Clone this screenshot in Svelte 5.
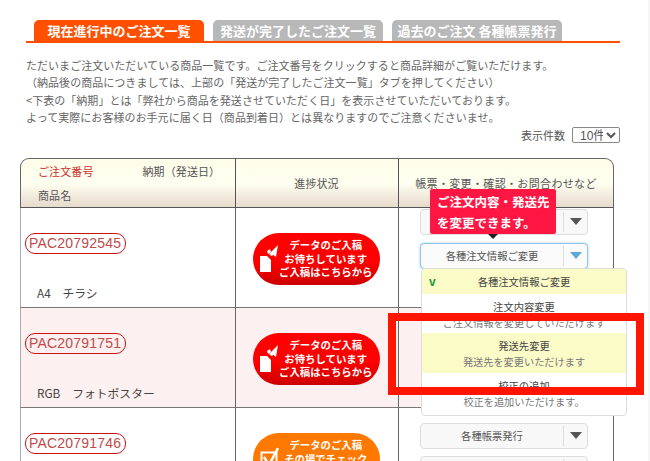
<script>
	const intro = [
		"ただいまご注文いただいている商品一覧です。ご注文番号をクリックすると商品詳細がご覧いただけます。",
		"（納品後の商品につきましては、上部の「発送が完了したご注文一覧」タブを押してください）",
		"<下表の「納期」とは「弊社から商品を発送させていただく日」を表示させていただいております。",
		"よって実際にお客様のお手元に届く日（商品到着日）とは異なりますのでご注意くださいませ。"
	];

	const tabs = ["現在進行中のご注文一覧", "発送が完了したご注文一覧", "過去のご注文 各種帳票発行"];

	const orders = [
		{ no: "PAC20792545", name: "A4　チラシ", kind: "wait", lines: ["データのご入稿", "お待ちしています", "ご入稿はこちらから"], open: true },
		{ no: "PAC20791751", name: "RGB　フォトポスター", kind: "wait", lines: ["データのご入稿", "お待ちしています", "ご入稿はこちらから"], pink: true },
		{ no: "PAC20791746", name: "", kind: "check", lines: ["データのご入稿", "その場でチェック", "ご入稿はこちらから"] }
	];
</script>

<div class="page">
	<div class="tabs">
		{#each tabs as t, i}
			<div class="tab" class:active={i === 0}>{t}</div>
		{/each}
	</div>

	<div class="intro">
		{#each intro as line}
			<p>{line}</p>
		{/each}
	</div>

	<div class="count">
		<span>表示件数</span>
		<select><option>10件</option></select>
	</div>

	<div class="table">
		<div class="th first">
			<div class="th-top">
				<span class="red">ご注文番号</span>
				<span>納期（発送日）</span>
			</div>
			<div>商品名</div>
		</div>
		<div class="th mid">進捗状況</div>
		<div class="th last">帳票・変更・確認・お問合わせなど</div>

		{#each orders as o}
			<div class="td info" class:pink={o.pink}>
				<a class="no" href="#top">{o.no}</a>
				<div class="name">{o.name}</div>
			</div>
			<div class="td status" class:pink={o.pink}>
				<div class="pill {o.kind}">
					{#if o.kind === "wait"}
						<svg width="19" height="27" viewBox="0 0 19 27">
							<path d="M0 11h7l4 4v12H0z" fill="#fff" />
							<path d="M9 9l9-9-2 12-2.500-2-2 1z" fill="#fff" />
							<path d="M7 6l3-2 1 3-3 2z" fill="#fff" />
						</svg>
					{:else}
						<svg width="19" height="24" viewBox="0 0 19 24">
							<rect x="1.500" y="5.500" width="15" height="15" fill="none" stroke="#fff" stroke-width="2" />
							<path d="M4 10l5 8 9-17" fill="none" stroke="#fff" stroke-width="2.500" />
						</svg>
					{/if}
					<div class="pill-text">
						{#each o.lines as l}
							<div>{l}</div>
						{/each}
					</div>
				</div>
			</div>
			<div class="td actions" class:pink={o.pink} class:open={o.open}>
				{#if o.open}
					<div class="split"><span class="label">各種帳票発行</span><span class="arrow"><i></i></span></div>
					<div class="tooltip">ご注文内容・発送先<br />を変更できます。</div>
					<div class="split focus">
						<span class="label">各種注文情報ご変更</span><span class="arrow"><i></i></span>
						<div class="menu">
							<div class="item picked"><span class="tick">v</span>各種注文情報ご変更</div>
							<div class="item plain">
								<b>注文内容変更</b>
								<small>ご注文情報を変更していただけます</small>
							</div>
							<div class="item hover">
								<b>発送先変更</b>
								<small>発送先を変更いただけます</small>
							</div>
							<div class="item plain">
								<b>校正の追加</b>
								<small>校正を追加いただけます。</small>
							</div>
						</div>
					</div>
				{:else if !o.pink}
					<div class="split"><span class="label">各種帳票発行</span><span class="arrow"><i></i></span></div>
					<div class="split"><span class="label">各種注文情報ご変更</span><span class="arrow"><i></i></span></div>
				{/if}
			</div>
		{/each}
	</div>

	<div class="callout"></div>
</div>

<style>
	:global(body) {
		margin: 0;
		background: #fff;
	}

	.page {
		position: relative;
		height: 461px;
		overflow: hidden;
		padding-top: 20px;
		box-sizing: border-box;
		border-right: 2px solid #f6f6f6;
		font-family: "Noto Sans CJK JP", "Liberation Sans", sans-serif;
		font-size: 11px;
		color: #555;
	}

	.tabs {
		display: flex;
		gap: 9px;
		width: 586px;
		height: 21px;
		margin-left: 26px;
		padding-left: 8px;
		border-bottom: 2px solid #ff5000;
	}
	.tab {
		width: 170px;
		height: 21px;
		border-radius: 5px 5px 0 0;
		background: #b8b8b8;
		color: #fff;
		font-size: 13px;
		font-weight: 700;
		line-height: 21px;
		text-align: center;
		white-space: nowrap;
	}
	.tab.active {
		background: #ff5000;
		height: 23px;
	}

	.intro {
		margin: 14px 0 0 26px;
		line-height: 17.4px;
		color: #666;
		letter-spacing: 0.04px;
	}
	.intro p {
		margin: 0;
		white-space: nowrap;
	}

	.count {
		display: flex;
		justify-content: flex-end;
		align-items: center;
		gap: 7px;
		width: 620px;
		height: 16px;
	}
	.count select {
		width: 48px;
		height: 16px;
		padding: 0 0 0 3px;
		border: 1px solid #888;
		border-radius: 2px;
		background: #fff;
		color: #555;
		font-family: "Liberation Sans", "Noto Sans CJK JP", sans-serif;
		font-size: 12px;
		line-height: 14px;
	}

	.table {
		display: grid;
		grid-template-columns: 215px 163px 216px;
		grid-template-rows: 50px 100px 100px 100px;
		width: 594px;
		margin: 15px 0 0 20px;
	}

	.th {
		display: flex;
		align-items: center;
		justify-content: center;
		box-sizing: border-box;
		background: linear-gradient(#fefde9 0, #fffff0 50%, #e6dbcd 100%);
		border-top: 1px solid #666;
		border-bottom: 1px solid #555;
		letter-spacing: 0.1px;
	}
	.th.first {
		display: block;
		padding: 0 0 0 17px;
		border-left: 1px solid #666;
		border-top-left-radius: 9px;
		line-height: 24px;
	}
	.th-top {
		display: flex;
		gap: 49px;
	}
	.red {
		color: #cc3333;
	}
	.th.mid {
		border-left: 1px solid #555;
		padding-right: 1px;
	}
	.th.last {
		border-left: 1px solid #555;
		border-right: 1px solid #666;
		border-top-right-radius: 9px;
		letter-spacing: 0.35px;
	}

	.td {
		box-sizing: border-box;
		background: #fff;
		border-bottom: 1px solid #777;
		border-left: 1px solid #666;
	}
	.td.pink {
		background: #fdf0f0;
	}

	.info {
		display: flex;
		flex-direction: column;
		align-items: flex-start;
		padding: 25px 0 0 4px;
		border-left-color: #aaa;
	}
	.no {
		padding: 0 4px 0 3px;
		height: 19px;
		border: 1px solid #cc1111;
		border-radius: 10px;
		color: #c24a4a;
		font-family: "Liberation Sans", sans-serif;
		font-size: 14px;
		letter-spacing: 0.2px;
		line-height: 19px;
		text-decoration: none;
	}
	.name {
		margin: auto 0 6px 12px;
		font-size: 11.8px;
		color: #444;
	}

	.status {
		padding: 25px 0 0 17px;
	}
	.pill {
		display: flex;
		align-items: center;
		width: 127px;
		height: 52px;
		padding-left: 7px;
		box-sizing: border-box;
		border-radius: 26px;
		color: #fff;
		font-size: 10.4px;
		font-weight: 700;
	}
	.pill svg {
		flex: none;
	}
	.pill.wait {
		background: linear-gradient(#ff0000 55%, #cc0000);
	}
	.pill.check {
		background: #ff7800;
	}
	.pill-text {
		flex: 1;
		padding-right: 8px;
		line-height: 13.5px;
		text-align: center;
		white-space: nowrap;
	}

	.actions {
		position: relative;
		display: flex;
		flex-direction: column;
		gap: 7px;
		padding: 15px 0 0 21px;
		border-right: 1px solid #666;
	}
	.actions.open {
		gap: 8px;
		padding-top: 1px;
	}

	.split {
		position: relative;
		display: flex;
		align-items: center;
		width: 168px;
		height: 26px;
		box-sizing: border-box;
		background: #f8f8f8;
		border: 1px solid #ddd;
		border-radius: 4px;
	}
	.split.focus {
		border-color: #8ec4ec;
		box-shadow: 0 0 3px #a8d4f4;
		background: #fbfbfb;
	}
	.label {
		width: 142px;
		font-size: 10.3px;
		text-align: center;
		color: #555;
		white-space: nowrap;
	}
	.arrow {
		display: flex;
		align-items: center;
		justify-content: center;
		flex: 1;
		height: 20px;
		border-left: 1px solid #ddd;
	}
	.arrow i {
		width: 0;
		height: 0;
		border-left: 6px solid transparent;
		border-right: 6px solid transparent;
		border-top: 7px solid #555;
	}
	.focus .arrow i {
		border-top-color: #5aa9d8;
	}

	.tooltip {
		position: absolute;
		z-index: 3;
		top: -19px;
		left: 31px;
		width: 126px;
		height: 45px;
		padding: 2px 0 0 7px;
		box-sizing: border-box;
		background: #ff1744;
		border-radius: 2px;
		color: #fff;
		font-size: 12.5px;
		font-weight: 700;
		line-height: 21px;
		white-space: nowrap;
	}
	.tooltip::after {
		content: "";
		position: absolute;
		top: 45px;
		left: 58px;
		border-left: 5px solid transparent;
		border-right: 5px solid transparent;
		border-top: 5px solid #222;
	}

	.menu {
		position: absolute;
		z-index: 2;
		top: 24px;
		left: 0;
		width: 206px;
		height: 148px;
		overflow: hidden;
		box-sizing: border-box;
		background: #fff;
		border: 1px solid #ddd;
		border-radius: 4px;
		font-size: 10.3px;
		text-align: center;
	}
	.item {
		display: flex;
		flex-direction: column;
		align-items: center;
		white-space: nowrap;
	}
	.item b {
		font-weight: 400;
		color: #444;
		line-height: 17px;
	}
	.item small {
		font-size: 10.2px;
		color: #777;
		line-height: 16px;
	}
	.picked {
		position: relative;
		height: 25px;
		justify-content: center;
		background: #fbfbc8;
		color: #444;
	}
	.tick {
		position: absolute;
		left: 7px;
		top: 6px;
		color: #1a9a3a;
		font-family: "Liberation Sans", sans-serif;
		font-size: 12px;
		font-weight: 700;
	}
	.plain {
		height: 39px;
		padding-top: 4px;
		box-sizing: border-box;
	}
	.hover {
		height: 40px;
		padding-top: 4px;
		box-sizing: border-box;
		background: #fbfbc8;
	}

	.callout {
		position: absolute;
		z-index: 4;
		top: 313px;
		left: 388px;
		width: 256px;
		height: 82px;
		box-sizing: border-box;
		border: 8px solid #ff1500;
	}
</style>
